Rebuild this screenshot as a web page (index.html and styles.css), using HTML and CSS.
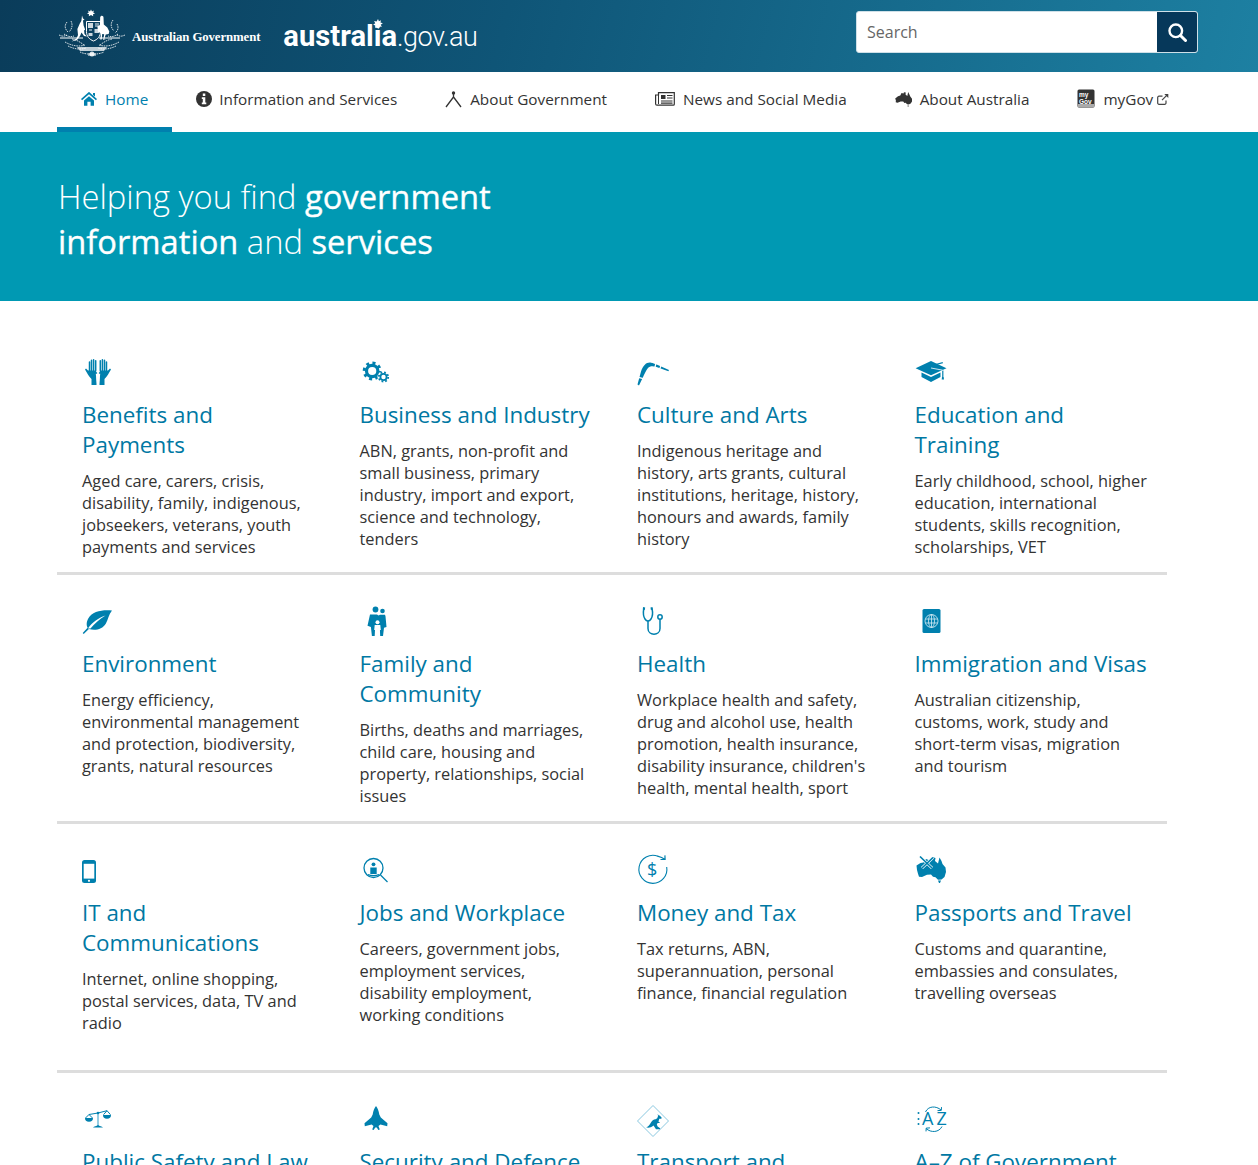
FILE: index.html
```html
<!DOCTYPE html>
<html lang="en">
<head>
<meta charset="utf-8">
<title>australia.gov.au</title>
<link rel="stylesheet" href="styles.css">
</head>
<body>
<div class="page">
<header class="masthead">
  <a class="brand" href="#">
    <svg class="crest" width="68" height="50" viewBox="0 0 68 50" fill="#fff" stroke="none">
      <polygon points="33,1.5 34,3.4 36,2.6 35.2,4.6 37,5.6 35,6.2 35.2,8.2 33,7 30.8,8.2 31,6.2 29,5.6 30.8,4.6 30,2.6 32,3.4"/>
      <path d="M24 7.500l1 3 1.500 1-1.500 1 .6 5 1.500 4-1 1 .4 3.500 2.500 2.500-3-.6-2.500-3.500-1.500 3.500-3 4-5.500 1.500 5-3 1.500-3.500-.6-6 2.400-5.500 1.500-2.500.4-2.400z"/>
      <path d="M43 8c1.500-.6 2.500.4 2.500 1.500l.3 7 3.500 3 2 4-.6 2.500-3 .5-1.500 5h2l-3 .5 1-5.800-2-.2-.5 5.500h-1.500l.8-6-3-2-.6-5 2.500-1.500.3-8z"/>
      <path d="M28.500 13.500h14v10c0 5-3 8-7 9.500-4-1.500-7-4.500-7-9.500z" fill="none" stroke="#fff" stroke-width="1"/>
      <path d="M30 15h5v5h-5zM36.500 21h4.500v4h-4.500zM30.500 25h4v3h-4z" opacity=".8"/>
      <path d="M37 15h4v4h-4zM31 21h3v2h-3z" opacity=".45"/>
      <path d="M2 30h23M41 30h21" stroke="#fff" stroke-width="1.200"/>
      <g fill="none" stroke="#fff" stroke-width=".8" stroke-dasharray="1.600 .8">
        <path d="M9 14c-3 4-2 7 1 10M13 13c2 4 1 8-2 11M55 12c-3 4-2 8 1 11M59 16c2 3 1 7-2 9"/>
        <path d="M6 26c4 3 7 3 10 2M1 27c4 2 6 1 8 0M60 26c-4 3-7 3-10 2M67 27c-4 2-6 1-8 0"/>
        <path d="M7 34c7 4 14 5 20 3M10 38c6 3 12 4 18 2M61 34c-7 4-14 5-20 3M58 38c-6 3-12 4-18 2M22 44c6 3 18 3 24 0M14 31c5 1 8 3 12 6M54 31c-5 1-8 3-12 6"/>
      </g>
      <path d="M19 39h30l-3 4H22z" opacity=".75"/>
      <circle cx="34" cy="46" r="2.500" opacity=".85"/>
      <path d="M30 45h8v3h-8z" opacity=".5"/>
    </svg>
    <span class="brand-gov">Australian Government</span>
    <span class="brand-site"><b class="brand-bold">australia</b><span class="brand-light">.gov.au</span>
      <svg class="brand-star" width="10" height="10" viewBox="0 0 12 12"><polygon fill="#fff" points="6,0 7.100,2.700 9.700,1.500 8.900,4.300 11.800,5.200 9.200,6.800 10.700,9.400 7.800,9 7,12 5.200,9.400 2.600,10.700 3,7.800 .2,7 2.700,5.200 1.300,2.500 4.300,3"/></svg>
    </span>
  </a>
  <form class="search">
    <span class="search-text">Search</span>
    <span class="search-btn">
      <svg width="20" height="20" viewBox="0 0 20 20" fill="none" stroke="#fff"><circle cx="8.800" cy="8.800" r="6.300" stroke-width="2.400"/><path d="M13.500 13.500l5 5" stroke-width="3" stroke-linecap="round"/></svg>
    </span>
  </form>
</header>

<nav class="nav">
  <a class="nav-item active" href="#">
    <svg class="nav-icon" width="16" height="14" viewBox="0 0 16 14" fill="#0080ae"><path d="M.5 7.600L8 1l7.500 6.600" fill="none" stroke="#0080ae" stroke-width="1.700"/><path d="M12 1h2v3.500l-2-1.500zM3 8.500l5-4.300 5 4.300v5.300H9.600V9.700H6.400v4.100H3z"/></svg>
    Home</a>
  <a class="nav-item" href="#">
    <svg class="nav-icon nav-icon-tight" width="16" height="16" viewBox="0 0 16 16"><circle cx="8" cy="8" r="8" fill="#333"/><path fill="#fff" d="M6.800 2.600h2.500v2.300H6.800zM5.800 6.200h3.500v5.300h1v1.700H5.800v-1.700h1V7.900h-1z"/></svg>
    Information and Services</a>
  <a class="nav-item" href="#">
    <svg class="nav-icon" width="17" height="18" viewBox="0 0 17 18" fill="none" stroke="#333"><circle cx="8.500" cy="3" r="1.700" fill="#333" stroke="none"/><path d="M8.500 4v3.500M8.500 7L1 17M8.500 7L16 17" stroke-width="1.300"/></svg>
    About Government</a>
  <a class="nav-item" href="#">
    <svg class="nav-icon" width="20" height="14" viewBox="0 0 20 14" fill="none" stroke="#333"><path d="M3.500.7h15.800v11.500a1 1 0 0 1-1 1H2a1.500 1.500 0 0 1-1.400-1.500V3h2.900z" stroke-width="1.200"/><path d="M3.500 3v9" stroke-width="1"/><path d="M6 3h4.500v4H6z" fill="#333" stroke="none"/><path d="M12 3.500h5.500M12 6h5.500M6 9h11.500M6 11.200h11.500" stroke-width="1.200"/></svg>
    News and Social Media</a>
  <a class="nav-item" href="#">
    <svg class="nav-icon" width="17" height="16" viewBox="0 0 17 16" fill="#333"><path d="M.2 7.500L3 5.300l2.300-.8L6.500 2l2 .6L9 1.200l1.800.4-.3 2 1.800 1.400.9-4 1.200 2.400.9 2.200 1.700 2.200.2 2.400-1.500 2.200-2 1.100-1.600-.3-1.500-1.500-1.200.3-1.200-1.500-2.500-.1-3.200 1.300-1.800-.4L.9 9.500z"/><path d="M12.500 14.500h1.300l-.4 1.200h-.6z"/></svg>
    About Australia</a>
  <a class="nav-item" href="#">
    <svg class="nav-icon" width="18" height="19" viewBox="0 0 18 19"><rect x=".5" y=".5" width="17" height="18" rx="1.500" fill="#333"/><text x="2" y="8" class="mygov-text">my</text><text x="2" y="14.500" class="mygov-text">Gov</text><rect x="1" y="15" width="16" height="3" fill="#aaa"/></svg>
    myGov<svg class="ext-icon" width="12" height="12" viewBox="0 0 12 12" fill="none" stroke="#444" stroke-width="1.200"><path d="M9 7.500V10a1.300 1.300 0 0 1-1.300 1.300H2A1.300 1.300 0 0 1 .7 10V4.500A1.300 1.300 0 0 1 2 3.200h3.500"/><path d="M5 7.200L10.500 1.700"/><path d="M7.300 1h4v4z" fill="#444" stroke="none"/></svg></a>
</nav>

<section class="hero">
  <h1 class="hero-title">Helping you find <strong>government<br>information</strong> and <strong>services</strong></h1>
</section>

<main class="topics">
  <div class="row">
    <a class="card" href="#">
      <svg class="icon" viewBox="0 0 40 32">
        <g id="hand">
          <path class="fill" d="M6 14.500h9.500l-1 7.500v7H9.500v-6C7 21 5 17 3 13.600l1-1z"/>
          <path class="line" stroke-width="1.500" stroke-linecap="round" d="M7.500 16V6M9.500 16V4.300M11.600 16V3.800M13.700 16V4.800"/>
        </g>
        <use href="#hand" transform="translate(32 0) scale(-1 1)"/>
        <circle cx="16" cy="15.300" r="1.700" class="cut"/>
        <path class="cut" d="M13.800 17.700h4.400l-.6 6.300-.8 5h-1.600l-.8-5z"/>
      </svg>
      <h2 class="card-title">Benefits and Payments</h2>
      <p class="card-text">Aged care, carers, crisis, disability, family, indigenous, jobseekers, veterans, youth payments and services</p>
    </a>
    <a class="card" href="#">
      <svg class="icon" viewBox="0 0 40 32">
        <circle cx="12.200" cy="15" r="8" class="teeth" stroke-width="3" stroke-dasharray="3 3.280"/>
        <circle cx="12.200" cy="15" r="5.700" fill="none" stroke="#0080ae" stroke-width="3.200"/>
        <circle cx="23.500" cy="21" r="6" fill="#fff"/>
        <circle cx="23.500" cy="21" r="4.700" class="teeth" stroke-width="1.800" stroke-dasharray="1.800 1.890"/>
        <circle cx="23.500" cy="21" r="3.100" fill="none" stroke="#0080ae" stroke-width="1.800"/>
      </svg>
      <h2 class="card-title">Business and Industry</h2>
      <p class="card-text">ABN, grants, non-profit and small business, primary industry, import and export, science and technology, tenders</p>
    </a>
    <a class="card" href="#">
      <svg class="icon" viewBox="0 0 40 32">
        <path class="fill" d="M.5 28.600L4 15.500C6 9.500 9.500 6 14 6.700c2 .3 4.500 1.300 6.800 2.300L32 14l-.6 1.300-12.600-4.500c-3-1-6-.9-8 1.400-1.500 2-3.600 6-5.200 9.800L2 29.500z"/>
        <path d="M1.500 21.400l5.500 1.400M19 7l-1.500 6M24 9.500l-1.500 4" stroke="#fff" stroke-width="1.200"/>
      </svg>
      <h2 class="card-title">Culture and Arts</h2>
      <p class="card-text">Indigenous heritage and history, arts grants, cultural institutions, heritage, history, honours and awards, family history</p>
    </a>
    <a class="card" href="#">
      <svg class="icon" viewBox="0 0 40 32">
        <path class="fill" d="M16 5l15.500 7.200L16 19.300.6 12.200z"/>
        <path class="fill" d="M6.500 16.600L16 21l9.500-4.400v4.300L16 26l-9.500-5z"/>
        <path class="line" stroke-width="1.200" d="M27.800 14.500V21M19 9l8.800-2.300"/>
        <path class="fill" d="M27 21h1.700l.3 2.500h-2.300z"/>
        <path d="M16 12l11.800 2.200" stroke="#fff" stroke-width=".8" fill="none"/>
      </svg>
      <h2 class="card-title">Education and Training</h2>
      <p class="card-text">Early childhood, school, higher education, international students, skills recognition, scholarships, VET</p>
    </a>
  </div>

  <div class="row">
    <a class="card" href="#">
      <svg class="icon" viewBox="0 0 40 32">
        <path class="fill" d="M30 5.500C22 4.600 10 5.500 6 14c-2 4-1.300 7-.4 8.700L.7 28l1 1 5.200-5c6 1.800 13.500.6 17-5.500 2-3.700 3-9.500 6.100-13z"/>
        <path d="M6 23.500C10 17.500 16 13 23.500 10.500 17 14.500 12.500 18.500 8.500 23.500z" fill="#fff"/>
      </svg>
      <h2 class="card-title">Environment</h2>
      <p class="card-text">Energy efficiency, environmental management and protection, biodiversity, grants, natural resources</p>
    </a>
    <a class="card" href="#">
      <svg class="icon" viewBox="0 0 40 32">
        <circle cx="15.500" cy="4.500" r="2.900" class="fill"/>
        <circle cx="22.500" cy="6" r="2.300" class="fill"/>
        <path class="fill" d="M10 9.500h7l1.500 1 1.500-.8h5l.5 1.500 1 10.800-2.500.7L23 31h-2.800l-.4-8h-4.700l-.4 8h-2.800l-1-9-3.400-1.300z"/>
        <circle cx="17.500" cy="17.300" r="2" class="cut"/>
        <path class="cut" d="M14.700 20h5.600l.5 5h-1.200l-.1 4.500h-1.500v-4h-1v4h-1.400L15.500 25h-1.300z"/>
      </svg>
      <h2 class="card-title">Family and Community</h2>
      <p class="card-text">Births, deaths and marriages, child care, housing and property, relationships, social issues</p>
    </a>
    <a class="card" href="#">
      <svg class="icon" viewBox="0 0 40 32">
        <path class="line" stroke-width="1.500" d="M6.800 3.500C6 8 6 11 8 14c1.500 2.500 4.500 2.500 6 0 2-3 2-6 1-10.500"/>
        <path class="line" stroke-width="1.500" d="M11 16v7.500c0 7.500 12 7.500 12 0V14.500"/>
        <circle cx="23" cy="12" r="2.200" class="line" stroke-width="1.500"/>
        <path class="fill" d="M6 2l2.200.6-.4 2.400-2-.4zM15.500 2l-2 .6.400 2.400 2-.4z"/>
      </svg>
      <h2 class="card-title">Health</h2>
      <p class="card-text">Workplace health and safety, drug and alcohol use, health promotion, health insurance, disability insurance, children's health, mental health, sport</p>
    </a>
    <a class="card" href="#">
      <svg class="icon" viewBox="0 0 40 32">
        <rect x="7.500" y="4" width="18" height="24" rx="1.500" class="fill"/>
        <g fill="none" stroke="#d5ecf5" stroke-width=".8">
          <circle cx="16.500" cy="16" r="6.500"/>
          <ellipse cx="16.500" cy="16" rx="3" ry="6.500"/>
          <path d="M16.500 9.500v13M10.300 14h12.400M10.300 18h12.400"/>
        </g>
      </svg>
      <h2 class="card-title">Immigration and Visas</h2>
      <p class="card-text">Australian citizenship, customs, work, study and short-term visas, migration and tourism</p>
    </a>
  </div>

  <div class="row">
    <a class="card" href="#">
      <svg class="icon" viewBox="0 0 40 32">
        <rect x="0" y="6" width="14" height="23" rx="2.500" class="fill"/>
        <rect x="1.700" y="9.800" width="10.600" height="14.800" fill="#fff"/>
        <circle cx="7" cy="26.800" r="1.100" fill="#fff"/>
      </svg>
      <h2 class="card-title">IT and Communications</h2>
      <p class="card-text">Internet, online shopping, postal services, data, TV and radio</p>
    </a>
    <a class="card" href="#">
      <svg class="icon" viewBox="0 0 40 32">
        <circle cx="13.500" cy="14" r="9.500" class="line" stroke-width="1.300"/>
        <path class="line" stroke-width="1.300" d="M20.500 21l7 7"/>
        <circle cx="13.500" cy="10.300" r="1.900" class="fill"/>
        <path class="fill" d="M10.300 13.500h6.400V20h-6.400z"/>
        <path class="line" stroke-width="1.300" d="M8 20.500c3 1.600 8 1.600 11 0"/>
      </svg>
      <h2 class="card-title">Jobs and Workplace</h2>
      <p class="card-text">Careers, government jobs, employment services, disability employment, working conditions</p>
    </a>
    <a class="card" href="#">
      <svg class="icon" viewBox="0 0 40 32">
        <path class="line" stroke-width="1.100" d="M21 2.300A14 14 0 1 0 29.700 13"/>
        <path class="line" stroke-width="1.200" d="M20.500 2.200C23 2.800 26 4 28 5.500M23.500 5.500l4.600-.1-.2-4"/>
        <text x="10" y="21.500" class="money-text">$</text>
      </svg>
      <h2 class="card-title">Money and Tax</h2>
      <p class="card-text">Tax returns, ABN, superannuation, personal finance, financial regulation</p>
    </a>
    <a class="card" href="#">
      <svg class="icon" viewBox="0 0 40 32">
        <path class="fill" d="M1.500 11.500l4-2.500 3-.5 2.500-3.500 4 1.500 2-3.500 3.500 1-.5 3 3 2.500 1.500-6 2 3.500 1 3 3 3.500.5 4.500-1.500 5-3 2.500-3.500.2-2.500-2.500-2.500-.5-2-2.200-4 .2-5 2.200-3-.2-1-3L2 16z"/>
        <path class="fill" d="M23 26.500h3l-1 2.500h-1z"/>
        <path d="M5 2.500l12 11.500M18 3.500L7 14" fill="none" stroke="#fff" stroke-width="3"/>
        <path d="M5 2.500l12 11.500M18 3.500L7 14" fill="none" stroke="#0080ae" stroke-width="1.700"/>
      </svg>
      <h2 class="card-title">Passports and Travel</h2>
      <p class="card-text">Customs and quarantine, embassies and consulates, travelling overseas</p>
    </a>
  </div>

  <div class="row">
    <a class="card" href="#">
      <svg class="icon" viewBox="0 0 40 32">
        <path d="M16 10v13" stroke="#8ac8e0" stroke-width="1.800" fill="none"/>
        <path class="line" stroke-width="1" d="M7 11.500L16 10l9-2.300M7 11.500L3.500 15M7 11.500l3.500 3.500M25 7.700l-3.500 4M25 7.700l3.500 4"/>
        <path class="fill" d="M3 15h8a4 3.800 0 0 1-8 0zM21 12h8a4 3.800 0 0 1-8 0zM11 24.500c1-1.200 3.500-1.500 5-2.500 1.500 1 4 1.300 5 2.500z"/>
        <circle cx="16" cy="10" r="1.300" class="fill"/>
      </svg>
      <h2 class="card-title">Public Safety and Law</h2>
    </a>
    <a class="card" href="#">
      <svg class="icon" viewBox="0 0 40 32">
        <path class="fill" d="M16 3c1.700 2 2.800 5 3.300 8.500l1.500 3 6.700 5.700-.3 3-6.800-1.700-1.900 1.500 1.300 3.500-1.500.6-1.500-2.500h-1.600l-1.500 2.500-1.500-.6 1.300-3.500-1.900-1.500-6.800 1.700-.3-3 6.700-5.700 1.500-3C13.200 8 14.300 5 16 3z"/>
      </svg>
      <h2 class="card-title">Security and Defence</h2>
    </a>
    <a class="card" href="#">
      <svg class="icon" viewBox="0 0 40 32">
        <path d="M16 2.500l15.500 15.500L16 33.500.5 18z" fill="none" stroke="#8ac8e0" stroke-width="1"/>
        <path class="fill" transform="translate(3 2.500) scale(.82 .95)" d="M7.500 23C10 22.500 11.500 21 13 18.500 14.500 16 16.500 14.500 19 14.500L21 13.500 22 11 21.500 9 23 10.500H24L26.500 13 26 14H23.500L22.500 17 24 17.500V18.500H21.500L20.500 20 21.500 22 24.500 24V25H19.500L16.500 21C13.500 23 10.500 24 7.500 23Z"/>
      </svg>
      <h2 class="card-title">Transport and Regional</h2>
    </a>
    <a class="card" href="#">
      <svg class="icon" viewBox="0 0 40 32">
        <text x="7" y="22" class="az-text">A</text>
        <text x="21.500" y="22" class="az-text">Z</text>
        <circle cx="3.500" cy="10" r="1" class="fill"/>
        <circle cx="3.500" cy="16" r="1" class="fill"/>
        <circle cx="3.500" cy="21" r="1" class="fill"/>
        <path class="line" stroke-width="1" d="M10.500 9C13 3 21 2.500 26 7"/>
        <path class="line" stroke-width="1" d="M22.500 7.600l3.800-.2.200-3.300"/>
        <path class="line" stroke-width="1" d="M27 23.500c-3 6-11 6.500-16 2"/>
        <path class="line" stroke-width="1" d="M15 24.900l-3.800.2-.2 3.300"/>
      </svg>
      <h2 class="card-title">A–Z of Government Agencies</h2>
    </a>
  </div>
</main>
</div>
</body>
</html>
```

FILE: styles.css
```css
* { box-sizing: border-box; }
html, body { margin: 0; padding: 0; background: #fff; }
body { font-family: "Open Sans", "Liberation Sans", sans-serif; color: #333; }
a { color: inherit; text-decoration: none; }

.page { height: 1165px; overflow: hidden; }

/* masthead */
.masthead {
  height: 72px;
  display: flex;
  align-items: center;
  justify-content: space-between;
  padding: 0 60px 0 58px;
  background: linear-gradient(105deg, #0a3c5a 0%, #0f5577 40%, #1d80a2 100%);
}
.brand { display: flex; align-items: center; color: #fff; }
.crest { display: block; margin-top: -7px; flex: none; }
.brand-gov {
  margin-left: 6px;
  font-family: "Liberation Serif", serif;
  font-weight: 700;
  font-size: 12.800px;
  letter-spacing: -.1px;
  margin-top: 3px;
}
.brand-site { position: relative; margin-left: 23px; font-family: Roboto, sans-serif; font-size: 29.200px; line-height: 40px; white-space: nowrap; }
.brand-bold { font-weight: 700; }
.brand-light { font-weight: 300; font-size: 27px; letter-spacing: -.5px; }
.brand-star { position: absolute; left: 90px; top: 3px; }

.search {
  width: 342px;
  height: 42px;
  margin-top: -8px;
  display: flex;
  background: #fff;
  border: 1px solid #cfe0e8;
  border-radius: 3px;
  overflow: hidden;
}
.search-text { flex: 1; padding: 0 10px; font-size: 16px; line-height: 40px; color: #666; }
.search-btn { width: 40px; display: flex; align-items: center; justify-content: center; background: #06385a; }

/* nav */
.nav { height: 60px; display: flex; padding-left: 57px; }
.nav-item {
  height: 60px;
  display: flex;
  align-items: center;
  padding: 0 24px 7px;
  font-size: 15.300px;
  color: #333;
  white-space: nowrap;
}
.nav-item.active { color: #0080ae; border-bottom: 5px solid #0080ae; padding-bottom: 2px; }
.nav-icon { flex: none; margin-right: 8px; }
.nav-icon-tight { margin-right: 7px; }
.ext-icon { flex: none; margin-left: 4px; }
.mygov-text { font-family: "Liberation Sans", sans-serif; font-weight: 700; font-size: 6.500px; fill: #fff; }

/* hero */
.hero { height: 169px; padding: 42px 58px 0; background: #0099b3; color: #fff; }
.hero-title { margin: 0; font-size: 32.700px; font-weight: 300; line-height: 45px; }
.hero-title strong { font-weight: 400; -webkit-text-stroke: .35px #fff; }

/* topics */
.topics { width: 1110px; margin-left: 57px; padding-top: 25px; }
.row {
  min-height: 249px;
  display: grid;
  grid-template-columns: repeat(4, 1fr);
  padding-top: 30px;
  border-bottom: 3px solid #ddd;
}
.card { display: block; padding: 0 20px 0 25px; }
.icon { display: block; width: 40px; height: 32px; overflow: visible; }
.fill { fill: #0080ae; }
.cut { fill: #fff; }
.line { fill: none; stroke: #0080ae; }
.teeth { fill: none; stroke: #0080ae; }
.money-text { font-family: "Open Sans", sans-serif; font-size: 18px; fill: #0080ae; }
.az-text { font-family: "Open Sans", sans-serif; font-size: 18px; font-weight: 400; fill: #0080ae; }
.card-title { margin: 12px 0 10px; font-size: 22.400px; font-weight: 400; line-height: 30px; color: #0078a3; }
.card-text { margin: 0; font-size: 16.350px; line-height: 22px; color: #333; }
```
